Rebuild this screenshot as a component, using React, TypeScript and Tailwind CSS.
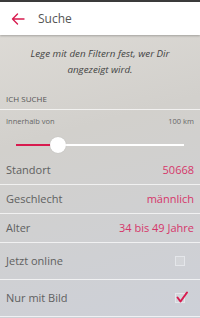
import React from 'react';

const RED = '#d81b4f';

const Row: React.FC<{ label: string; value?: string; children?: React.ReactNode; tall?: boolean }> = ({ label, value, children, tall }) => (
  <div className={`flex items-center justify-between px-[6px] border-b border-white/70 ${tall ? 'h-[37px]' : 'h-[29px]'}`}>
    <span className="text-[11px] text-[#606060]">{label}</span>
    {value && <span className="text-[11px] text-[#d6366a]">{value}</span>}
    {children}
  </div>
);

const Checkbox: React.FC<{ checked?: boolean }> = ({ checked }) => (
  <div className="relative w-[10px] h-[10px] mr-[9px] border border-[#e4e6ea] bg-white/10">
    {checked && (
      <svg className="absolute left-[0px] top-[-3px]" width="13" height="13" viewBox="0 0 13 13">
        <path d="M1.5 6.5 L4.5 10.5 L11 1.5" fill="none" stroke={RED} strokeWidth="2" strokeLinecap="round" strokeLinejoin="round" />
      </svg>
    )}
  </div>
);

export default function App() {
  return (
    <div className="w-[200px] h-[318px] overflow-hidden bg-[linear-gradient(165deg,#e0ddd8_0%,#d2d0cc_40%,#cdd0d8_100%)] font-['Open_Sans',sans-serif]">
      <div className="h-[2px] bg-[#3b3b3b]" />
      <div className="h-[33px] bg-white flex items-center shadow-[0_1px_2px_rgba(0,0,0,0.25)] relative">
        <svg className="ml-[11px]" width="14" height="12" viewBox="0 0 14 12">
          <path d="M13 6 H1.5 M6.5 1 L1.5 6 L6.5 11" fill="none" stroke={RED} strokeWidth="1.4" strokeLinecap="round" strokeLinejoin="round" />
        </svg>
        <span className="ml-[13px] text-[12px] text-[#555]">Suche</span>
      </div>
      <div className="h-[54px] pt-[11px] text-center italic text-[9.8px] leading-[16px] text-[#444]">
        Lege mit den Filtern fest, wer Dir
        <br />
        angezeigt wird.
      </div>
      <div className="h-[21px] flex items-center px-[6px] border-b border-white/70 text-[8px] text-[#555]">ICH SUCHE</div>
      <div className="h-[24px] flex items-center justify-between px-[6px] text-[7.5px] text-[#666]">
        <span>Innerhalb von</span>
        <span>100 km</span>
      </div>
      <div className="h-[22px] flex items-center px-[16px]">
        <div className="relative w-full h-[2px] bg-white">
          <div className="absolute left-0 top-0 h-[2px] w-[36px] bg-[#d81b4f]" />
          <div className="absolute left-[34px] top-[-7px] w-[16px] h-[16px] rounded-full bg-white shadow-[0_0_1px_rgba(0,0,0,0.2)]" />
        </div>
      </div>
      <Row label="Standort" value="50668" />
      <Row label="Geschlecht" value="männlich" />
      <Row label="Alter" value="34 bis 49 Jahre" />
      <Row label="Jetzt online" tall>
        <Checkbox />
      </Row>
      <Row label="Nur mit Bild" tall>
        <Checkbox checked />
      </Row>
    </div>
  );
}
